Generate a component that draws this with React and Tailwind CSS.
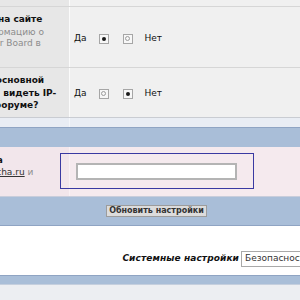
const Radio = ({ on }) => (
  <span className="w-[10px] h-[10px] border border-[#a6a6a6] bg-[#f7f7f7] flex items-center justify-center">
    {on ? (
      <span className="w-[4px] h-[4px] rounded-full bg-[#1a1a1a]" />
    ) : (
      <span className="w-[5px] h-[5px] rounded-full border border-[#9c9c9c]" />
    )}
  </span>
);

function YesNo({ yes }) {
  return (
    <div className="flex items-center">
      <span>Да</span>
      <span className="ml-[12px]"><Radio on={yes} /></span>
      <span className="ml-[14px]"><Radio on={!yes} /></span>
      <span className="ml-[12px]">Нет</span>
    </div>
  );
}

export default function App() {
  return (
    <div className="w-[300px] h-[300px] overflow-hidden bg-[#eceef2] font-['DejaVu_Sans',sans-serif] text-[9px] text-[#111]">
      <div className="-ml-[170px] w-[520px]">
        {/* tail of the row above */}
        <div className="grid grid-cols-[239px_1fr] h-[7px] border-b border-[#d6d6d6]">
          <div className="bg-[#e7e7e7]" />
          <div className="bg-[#f0f0f0] border-l border-[#fbfbfb]" />
        </div>

        <div className="grid grid-cols-[239px_1fr] h-[61px] border-b border-[#d6d6d6]">
          <div className="bg-[#e7e7e7] pl-[8px] pt-[6px] overflow-hidden whitespace-nowrap">
            <div className="font-bold leading-[12px]">Показывать всех посетителей на сайте</div>
            <div className="mt-[2px] text-[#8c8c8c] leading-[11px]">
              <div>Выводить на главной сайта информацию о</div>
              <div>посетителях вашего Invision Power Board в</div>
            </div>
          </div>
          <div className="bg-[#f0f0f0] border-l border-[#fbfbfb] pl-[4px] pt-[3px] flex items-center">
            <YesNo yes />
          </div>
        </div>

        <div className="grid grid-cols-[239px_1fr] h-[50px] border-b border-[#c9ccd2]">
          <div className="bg-[#e7e7e7] pl-[8px] pt-[6px] overflow-hidden whitespace-nowrap font-bold leading-[12.5px]">
            <div>Разрешить пользователям на основной</div>
            <div>странице форума гостям сайта видеть IP-</div>
            <div>адреса иных посетителей на форуме?</div>
          </div>
          <div className="bg-[#f0f0f0] border-l border-[#fbfbfb] pl-[4px] pt-[2px] flex items-center">
            <YesNo />
          </div>
        </div>

        <div className="grid grid-cols-[239px_1fr] h-[10px] border-b border-[#8fa4c3]">
          <div className="bg-[#e9edf4]" />
          <div className="bg-[#e9edf4] border-l border-[#f4f6fa]" />
        </div>
        <div className="h-[19px] bg-[#a9bed8]" />

        <div className="relative grid grid-cols-[239px_1fr] h-[50px] border-b border-[#c8cddb]">
          <div className="bg-[#f2e6eb] pl-[8px] pt-[7px] overflow-hidden whitespace-nowrap leading-[12px]">
            <div className="font-bold">Открытый ключ к Recaptcha на</div>
            <div className="text-[#8c8c8c]">
              Пройдите регистрацию на <span className="text-[#333] underline">recaptcha.ru</span> и
            </div>
          </div>
          <div className="bg-[#f5eaee] border-l border-[#f9f1f4] pl-[6px] flex items-center">
            <div className="w-[161px] h-[17px] bg-white border-2 border-[#b4b4b4]" />
          </div>
          <div className="absolute left-[230px] top-[6px] w-[194px] h-[36px] border-[1.5px] border-[#3a3aa2]" />
        </div>

        <div className="h-[29px] bg-[#a9bed8] border-b border-[#8fa4c3] flex items-center pl-[276px]">
          <button className="w-[101px] h-[12px] bg-[#dcdcdc] border border-[#9c9c9c] text-[8px] font-bold text-[#333] leading-none flex items-center justify-center">
            Обновить настройки
          </button>
        </div>

        <div className="h-[50px] bg-white border-b border-[#8fa4c3] flex items-center justify-end pt-[17px] pr-[10px]">
          <span className="font-bold italic tracking-[0.1px] mr-[2px]">Системные настройки</span>
          <div className="w-[99px] h-[16px] border border-[#a9a9a9] bg-white pl-[3px] flex items-center text-[9px] text-[#333]">
            Безопасность
          </div>
        </div>

        <div className="h-[9px] bg-[#a9bed8] border-b border-[#c5cfde]" />
      </div>
    </div>
  );
}
